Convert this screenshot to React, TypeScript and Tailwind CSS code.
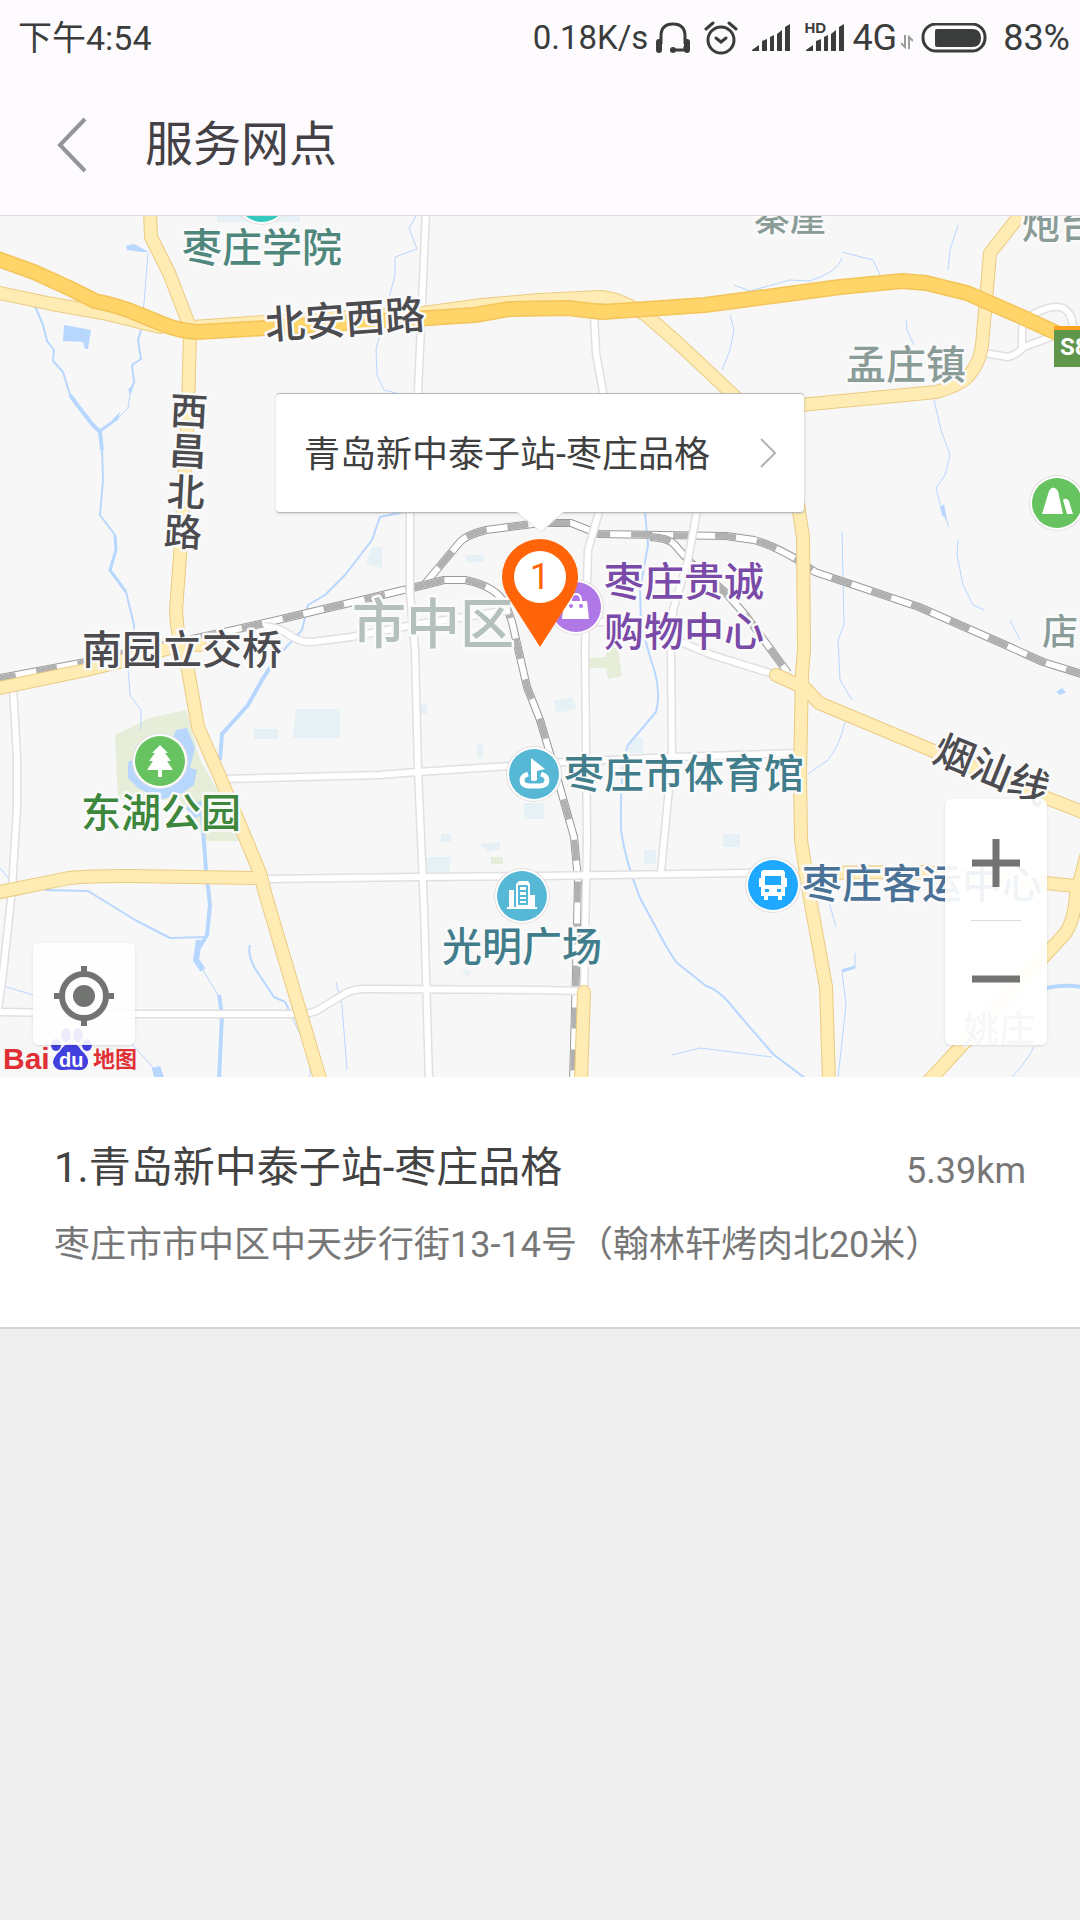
import type { ReactNode } from "react";

const UI_FONT = "font-['Roboto','Noto_Sans_CJK_SC',sans-serif]";
const MAP_FONT = "font-['Noto_Sans_CJK_SC',sans-serif]";

const whiteRoads = [
  "M426 210L422 303L418 392L410 512L410 593L415 650L418 770L424 907L429 1080",
  "M594 314L596 353L603 392L606 450L599 512L588 550L585 650L587 840L584 990",
  "M698 505L688 560L673 610L671 650L672 757L661 872",
  "M676 640L712 655L776 675",
  "M587 622H626",
  "M222 779L379 775L417 772L510 766L564 762L674 757L800 753",
  "M265 879L417 877L540 876L747 873L805 873",
  "M0 1012L134 1014L296 1014Q308 1015 318 1010L346 993Q355 989 365 989L540 990L580 991",
  "M13 688L17 757L17 807L12 890L3 973L-2 1010",
  "M264 626Q280 628 288 634Q300 643 312 642L351 637L413 625L510 610",
  "M984 353L1008 357Q1018 354 1024 347L1056 335",
  "M1022 350V332Q1022 318 1040 311Q1070 298 1073 326",
];

const yellowRoads = [
  "M-5 292L52 304L103 313L160 327",
  "M150 210L151 237L169 273L188 322",
  "M193 327L265 322L424 313L482 305L540 300L600 297Q620 298 647 316L678 343L728 390L745 406",
  "M800 405L936 392Q962 385 970 374Q980 362 982 345L988 277L990 253L1024 210",
  "M190 332L188 410L181 543L176 610Q177 640 188 670L198 727L220 777L260 873L265 893L321 1082",
  "M-5 689L86 670L127 660L184 644L200 645",
  "M-5 893L69 878Q90 876 127 876L258 878",
  "M798 505L803 537L804 650L802 673L800 773L801 840L809 893L826 987L829 1082",
  "M776 675L805 688L819 703L936 752L1039 795L1085 813",
  "M805 873L922 872L1046 883L1085 887",
  "M1088 850L1076 895Q1074 925 1062 937L928 1082",
  "M584 992L581 1082",
];

const highway =
  "M-5 258L34 272L69 288L95 301Q120 306 138 314L165 325Q180 331 198 332L265 328L413 319L475 315L510 309L568 308L602 312L705 305L788 294L840 287L902 281L926 283L967 293L1022 317L1085 346";

const rails = [
  "M-5 679L86 662L220 633L269 622L362 600L424 585L460 542Q466 535 486 530L540 523L571 523L599 534L726 536L754 540Q772 545 798 560L815 572L919 607L1001 643L1043 662L1085 675",
  "M424 585L444 580L465 580Q496 586 506 605L512 622L527 687L540 720L557 777L574 837L578 880L576 973L573 1082",
  "M650 537Q668 538 674 544L688 560L726 593L747 617L788 673",
];

const rivers = [
  { w: 2, d: "M35 306L43 325L47 341L54 350L53 361L63 372L70 395" },
  { w: 4, d: "M70 395L78 406L92 424L100 432L102 450" },
  { w: 2, d: "M102 450L103 480L100 515L115 535" },
  { w: 3, d: "M115 535L116 550L110 570L126 592" },
  { w: 2, d: "M126 592L134 625L134 640" },
  { w: 1, d: "M128 668L130 695L141 710V730" },
  { w: 1, d: "M148 253L144 303L141 330" },
  { w: 2, d: "M141 330L138 340L141 359L132 365L134 382L130 394" },
  { w: 1, d: "M130 394L128 408L118 418" },
  { w: 3, d: "M118 418L100 431" },
  { w: 1, d: "M416 216L409 228L417 249L395 257L395 275L386 310L376 350L377 375L384 390L400 394" },
  { w: 2, d: "M404 512L380 517L372 540L345 575L325 595L308 605L302 630L279 655" },
  { w: 4, d: "M275 660L262 680L248 705L222 734L220 760" },
  { w: 4, d: "M202 815L206 870L210 905L207 935L199 948" },
  { w: 6, d: "M199 940L196 960L203 970" },
  { w: 1, d: "M203 970L218 995" },
  { w: 4, d: "M219 995L222 1015L219 1080" },
  { w: 2, d: "M45 890L88 891L135 920L170 938L206 937" },
  { w: 2, d: "M250 945Q247 955 256 970L274 997L285 1002L290 1012" },
  { w: 1, d: "M290 1012L298 1030L310 1055V1080" },
  { w: 1, d: "M336 982L342 1005L347 1070" },
  { w: 1, d: "M0 985L40 997M130 1042L150 1064L160 1078M0 868L10 880" },
  { w: 2, d: "M645 512L648 545L640 590L641 625L651 660Q662 690 656 712L628 745Q620 765 621 830Q625 860 640 898L666 946L676 962L706 986Q720 990 735 1010L774 1055L805 1078" },
  { w: 1, d: "M672 1055L700 1048L772 1057" },
  { w: 1, d: "M734 285L750 291L790 280L810 281Q838 272 842 258M842 252L873 260L880 275" },
  { w: 1, d: "M906 320L907 330L914 345M958 225L950 250L948 270M730 315L734 330L730 350L722 370" },
  { w: 1, d: "M934 400L941 430L950 455L945 475L936 488L940 504L949 527M842 532L844 625L838 640L840 680L852 700" },
  { w: 1, d: "M958 540L957 555L963 585L973 605L984 610M1010 620L1020 640" },
  { w: 1, d: "M845 722Q840 745 828 760L808 774M829 902L836 927" },
  { w: 1, d: "M855 953V968" },
  { w: 3, d: "M855 967L842 971" },
  { w: 1, d: "M842 972L846 1005L838 1078" },
  { w: 4, d: "M1046 988Q1065 984 1082 987" },
  { w: 1, d: "M1036 1042Q1030 1058 1012 1077" },
];

type LabelProps = {
  x: number;
  y: number;
  fill: string;
  size?: number;
  rotate?: number;
  anchor?: "start" | "middle";
  children: string;
};

/* (x, y) is the middle of the glyphs' em boxes. */
function Label({ x, y, fill, size = 40, rotate = 0, anchor = "middle", children }: LabelProps) {
  return (
    <text
      x={x}
      y={y + Math.round(size * 0.38)}
      fill={fill}
      fontSize={size}
      textAnchor={anchor}
      stroke="#fafafa"
      strokeWidth={5}
      strokeLinejoin="round"
      paintOrder="stroke"
      transform={rotate ? `rotate(${rotate} ${x} ${y})` : undefined}
      className="font-medium"
    >
      {children}
    </text>
  );
}

function Poi({ x, y, fill, children }: { x: number; y: number; fill: string; children?: ReactNode }) {
  return (
    <g transform={`translate(${x} ${y})`}>
      <circle r={28} fill="#e4dede" />
      <circle r={27} fill="#fff" />
      <circle r={25} fill={fill} />
      {children}
    </g>
  );
}

function CityMap() {
  return (
    <svg
      viewBox="0 216 1080 861"
      className={`block h-full w-full ${MAP_FONT}`}
      fill="none"
      strokeLinejoin="round"
      role="img"
      aria-label="地图"
    >
      <rect y="216" width="1080" height="861" fill="#f7f7f7" />
      <g fill="#e6eed9">
        <path d="M115 735L150 718L186 710L200 760L238 826V841H206L180 800L118 800Z" />
        <path d="M588 658L606 657V648H618L622 676L608 679L606 668L588 668Z" />
        <path d="M491 857H503V864H491Z" />
      </g>
      <g fill="#e5f1f5">
        <path d="M296 709H340V738H293Z" />
        <path d="M254 729H278V739H254Z" />
        <path d="M217 222H300V210H217Z" />
        <path d="M372 547H382V568L366 564Z" />
        <path d="M466 555H484V562H466Z" />
        <path d="M477 743H483V757H477Z" />
        <path d="M554 701L572 697L577 709L556 713Z" />
        <path d="M632 738H643V753H627Z" />
        <path d="M723 834H740V847H723Z" />
        <path d="M425 857H451L449 872H425Z" />
        <path d="M480 844L500 842V849L488 852Z" />
        <path d="M441 834H451V842H441ZM420 705H427V714H420Z" />
        <path d="M524 803H544V819H524ZM644 850H656V864H644Z" />
        <path d="M462 969L472 972L466 977Z" />
      </g>
      <g fill="#b8d7ff">
        <path d="M64 325L91 330L88 349H85L83 342L63 341Z" />
        <path d="M126 246L134 244L149 252L142 252L127 250Z" />
        <path d="M128 762L172 740L176 730L187 728L195 748L190 768L197 770L194 785L182 793L160 800L138 788L128 778Z" />
        <path d="M186 808L202 800V815L195 818Z" />
        <path d="M152 1068L160 1066L164 1077H154Z" />
        <path d="M128 390L136 380L130 393ZM112 420L120 412L118 420Z" />
        <path d="M940 507L944 504L947 520L942 515ZM1056 692L1062 688L1066 692L1060 695Z" />
      </g>
      <g stroke="#b8d7ff">
        {rivers.map((r) => (
          <path key={r.d} d={r.d} strokeWidth={r.w} />
        ))}
      </g>
      {rails.map((d) => (
        <g key={d}>
          <path d={d} stroke="#9a9a9a" strokeWidth={8} />
          <path d={d} stroke="#fff" strokeWidth={6} />
          <path d={d} stroke="#b1b1b1" strokeWidth={6} strokeDasharray="21 21" />
        </g>
      ))}
      <g stroke="#e2dfe2" strokeWidth={9}>
        {whiteRoads.map((d) => (
          <path key={d} d={d} />
        ))}
      </g>
      <g stroke="#fff" strokeWidth={6}>
        {whiteRoads.map((d) => (
          <path key={d} d={d} />
        ))}
      </g>
      <g stroke="#ebca80" strokeWidth={14} strokeLinecap="round">
        {yellowRoads.map((d) => (
          <path key={d} d={d} />
        ))}
      </g>
      <g stroke="#ffecb5" strokeWidth={12} strokeLinecap="round">
        {yellowRoads.map((d) => (
          <path key={d} d={d} />
        ))}
      </g>
      <path d={highway} stroke="#f4c458" strokeWidth={16} />
      <path d={highway} stroke="#ffd56a" strokeWidth={13} />

      <path d="M1054 326H1080V367H1054Z" fill="#5f964a" />
      <path d="M1054 326H1080V330H1054Z" fill="#ffa21f" />
      <text x="1060" y="355" fill="#fff" fontSize="24" className="font-['Roboto',sans-serif] font-bold">
        S8
      </text>

      <Poi x={262} y={197} fill="#35c8be" />
      <Poi x={160} y={761} fill="#67c35f">
        <path
          d="M0 -16L8 -8H5L11 0H7L13 9H2V16H-2V9H-13L-7 0H-11L-5 -8H-8Z"
          fill="#fff"
        />
      </Poi>
      <Poi x={1057} y={503} fill="#67c35f">
        <path d="M-15 11L-8 -12Q-4 -19 1 -12L6 11ZM6 -3Q9 -6 12 -2L16 11H10Z" fill="#fff" />
      </Poi>
      <Poi x={534} y={774} fill="#56b8d5">
        <path d="M-6 0Q-12 2 -12 6Q-12 12 -4 12H5Q13 12 13 6Q13 2 7 0" stroke="#fff" strokeWidth={5} />
        <path d="M-3 6V-16L11 -5L3 -3V6Q0 8 -3 6Z" fill="#fff" />
      </Poi>
      <Poi x={522} y={896} fill="#56b8d5">
        <path d="M-15 13V11H-13V-6H-8V11H-6V-12L-3 -15H6L8 -12V-1H13V11H15V13Z" fill="#fff" />
        <path d="M-3 -10H5V8H-3ZM-3 -5H5M-3 0H5M-3 4H5" stroke="#56b8d5" strokeWidth={2} />
      </Poi>
      <Poi x={773} y={885} fill="#1fa8ff">
        <path
          d="M-9 -15H9Q12 -15 12 -11V-7H14V2H12V11H9V15H5V11H-5V15H-9V11H-12V2H-14V-7H-12V-11Q-12 -15 -9 -15Z"
          fill="#fff"
        />
        <path d="M-8 -9H8V0H-8ZM-8 4H-4V7H-8ZM4 4H8V7H4Z" fill="#1fa8ff" />
      </Poi>
      <Poi x={576} y={607} fill="#b077e6">
        <path d="M-12 -6H11L13 12H-14Z" fill="#fff" />
        <path d="M-5 -6Q-5 -13 0 -13Q5 -13 5 -6" stroke="#fff" strokeWidth={2} />
        <circle cx={-5} cy={-1} r={2} fill="#b077e6" />
        <circle cx={5} cy={-1} r={2} fill="#b077e6" />
      </Poi>

      <Label x={262} y={247} fill="#4f877c">枣庄学院</Label>
      <Label x={345} y={319} fill="#4c4c50" rotate={-4}>北安西路</Label>
      <Label x={189} y={411} fill="#4c4c50" size={38} rotate={3}>西</Label>
      <Label x={188} y={451} fill="#4c4c50" size={38} rotate={3}>昌</Label>
      <Label x={186} y={492} fill="#4c4c50" size={38} rotate={3}>北</Label>
      <Label x={183} y={532} fill="#4c4c50" size={38} rotate={3}>路</Label>
      <Label x={182} y={649} fill="#4c4c50">南园立交桥</Label>
      <Label x={433} y={623} fill="#b3c0bd" size={54}>市中区</Label>
      <Label x={790} y={217} fill="#8a9c97" size={36}>秦崖</Label>
      <Label x={1022} y={224} fill="#8a9c97" size={38} anchor="start">炮台</Label>
      <Label x={906} y={364} fill="#8a9c97">孟庄镇</Label>
      <Label x={1042} y={631} fill="#8a9c97" size={36} anchor="start">店</Label>
      <Label x={684} y={581} fill="#7a4aa8">枣庄贵诚</Label>
      <Label x={684} y={631} fill="#7a4aa8">购物中心</Label>
      <Label x={684} y={773} fill="#417d8b">枣庄市体育馆</Label>
      <Label x={522} y={946} fill="#417d8b">光明广场</Label>
      <Label x={922} y={883} fill="#4a7296">枣庄客运中心</Label>
      <Label x={161} y={812} fill="#3d873c">东湖公园</Label>
      <Label x={992} y={769} fill="#4c4c50" rotate={22}>烟汕线</Label>
      <Label x={999} y={1028} fill="#8a9c97" size={36}>姚庄</Label>

      <g fill="#4340e0">
        <ellipse cx={66} cy={1035} rx={5} ry={7} />
        <ellipse cx={78} cy={1035} rx={5} ry={7} />
        <ellipse cx={56} cy={1045} rx={5} ry={6} />
        <ellipse cx={87} cy={1045} rx={5} ry={6} />
        <path d="M71 1043Q77 1043 81 1050Q89 1057 88 1063Q86 1071 78 1070Q71 1069 64 1070Q55 1071 53 1063Q53 1057 60 1051Q65 1043 71 1043Z" />
      </g>
      <text x="3" y="1069" fill="#e03036" fontSize="30" className="font-['Liberation_Sans',sans-serif] font-bold">
        Bai
      </text>
      <text x="59" y="1067" fill="#fff" fontSize="20" className="font-['Liberation_Sans',sans-serif] font-bold">
        du
      </text>
      <text x="93" y="1067" fill="#e03036" fontSize="22" className="font-bold">
        地图
      </text>
    </svg>
  );
}

function SignalBars() {
  return (
    <svg viewBox="0 0 38 28" className="h-7 w-[38px]" fill="#3b3c3c" aria-hidden="true">
      <path d="M0 27V26L7 21V27ZM10 17L15 15V27H10ZM18 13L22 11V27H18ZM25 10L30 6V27H25ZM33 3L38 0V27H33Z" />
    </svg>
  );
}

function StatusBar() {
  return (
    <div className="flex h-[75px] items-center justify-between pr-[10px] pl-[18px] text-[#3b3c3c]">
      <time className="text-[34px] leading-10">下午4:54</time>
      <div className="flex items-center text-[36px] leading-10">
        <span className="text-[33px]">0.18K/s</span>
        <svg viewBox="0 0 34 32" className="ml-2 h-8 w-[34px]" fill="none" stroke="#3b3c3c" strokeWidth="3" aria-hidden="true">
          <path d="M5 22V14Q5 2 17 2Q29 2 29 14V22M17 28H29V24" />
          <path d="M3 20V28M31 20V28" strokeWidth="6" strokeLinecap="round" />
          <circle cx="17" cy="28" r="3" fill="#3b3c3c" stroke="none" />
        </svg>
        <svg viewBox="0 0 34 34" className="ml-[14px] h-[34px] w-[34px]" fill="none" stroke="#3b3c3c" strokeWidth="3" strokeLinecap="round" aria-hidden="true">
          <circle cx="17" cy="19" r="13" />
          <path d="M12 17L17 21L22 17M2 8L9 2M32 8L25 2" />
        </svg>
        <div className="ml-[14px]">
          <SignalBars />
        </div>
        <div className="relative ml-4">
          <SignalBars />
          <span className="absolute -top-1 -left-[2px] font-['Liberation_Sans',sans-serif] text-[15px] leading-none font-bold">HD</span>
        </div>
        <span className="ml-2">4G</span>
        <svg viewBox="0 0 12 14" className="mt-2 ml-1 h-[14px] w-3" fill="none" stroke="#9b9b9d" strokeWidth="2" aria-hidden="true">
          <path d="M4 0V12L0 8M8 14V2L12 6" />
        </svg>
        <svg viewBox="0 0 66 30" className="ml-2 h-[30px] w-[66px]" aria-hidden="true">
          <rect x="2" y="1" width="62" height="27" rx="13" fill="none" stroke="#3b3c3c" strokeWidth="3" />
          <path d="M16 6H51Q60 6 60 15Q60 24 51 24H16Q14 24 14 22V8Q14 6 16 6Z" fill="#3b3c3c" />
        </svg>
        <span className="ml-4">83%</span>
      </div>
    </div>
  );
}

export default function App() {
  return (
    <div className={`flex min-h-screen flex-col bg-[#efefef] ${UI_FONT}`}>
      <header className="border-b border-[#dedbde] bg-[#fefbff]">
        <StatusBar />
        <div className="flex h-[140px] items-center pl-14">
          <button type="button" aria-label="返回" className="h-14 w-8">
            <svg viewBox="0 0 32 56" className="h-14 w-8" fill="none" stroke="#929696" strokeWidth="4">
              <path d="M29 2L4 28L29 54" />
            </svg>
          </button>
          <h1 className="ml-[57px] text-[48px] leading-[56px] text-[#434145]">服务网点</h1>
        </div>
      </header>

      <section className="relative aspect-[1080/861] w-full overflow-hidden" aria-label="网点地图">
        <CityMap />

        <div className="absolute bottom-1/2 left-1/2 flex -translate-x-1/2 flex-col items-center">
          <button
            type="button"
            className="flex h-[120px] items-center gap-[50px] rounded-sm border-t border-b border-[#b9b9b9] bg-white px-7 pt-1 text-[36px] leading-10 whitespace-nowrap text-[#3f3f3f] shadow-sm"
          >
            青岛新中泰子站-枣庄品格
            <svg viewBox="0 0 16 30" className="-mt-1 h-[30px] w-4" fill="none" stroke="#b4b4b4" strokeWidth="2">
              <path d="M1 1L15 15L1 29" />
            </svg>
          </button>
          <svg viewBox="0 0 48 22" className="relative -mt-[2px] h-[22px] w-12" aria-hidden="true">
            <path d="M0 0H48L25 21Z" fill="#fff" />
            <path d="M0 1L25 21L48 1" fill="none" stroke="#dcdcdc" />
          </svg>
          <div className="relative mt-[6px]">
            <svg viewBox="0 0 76 108" className="h-[108px] w-[76px]" aria-hidden="true">
              <path d="M38 108L6 58Q0 48 0 38A38 38 0 0 1 76 38Q76 48 70 58Z" fill="#ff6508" />
              <circle cx="38" cy="38" r="26" fill="#fff" />
            </svg>
            <span className="absolute inset-x-0 top-5 text-center text-[36px] leading-9 text-[#ff6508]">1</span>
          </div>
        </div>

        <button
          type="button"
          aria-label="定位"
          className="absolute bottom-8 left-[33px] flex h-[102px] w-[102px] items-center justify-center rounded-md bg-white/90 pt-1 shadow-sm"
        >
          <svg viewBox="0 0 60 60" className="h-[60px] w-[60px]" fill="none" stroke="#727472" strokeWidth="6">
            <circle cx="30" cy="30" r="22" />
            <circle cx="30" cy="30" r="11" fill="#727472" stroke="none" />
            <path d="M30 0V8M30 52V60M0 30H8M52 30H60" />
          </svg>
        </button>

        <div className="absolute right-[33px] bottom-8 flex w-[102px] flex-col items-center rounded-md bg-white/92 pt-[6px] pb-[9px] shadow-sm">
          <button type="button" aria-label="放大" className="flex h-[115px] w-full items-center justify-center">
            <svg viewBox="0 0 48 48" className="h-12 w-12" stroke="#727472" strokeWidth="7">
              <path d="M24 0V48M0 24H48" />
            </svg>
          </button>
          <hr className="w-[50px] border-[#dcdcdc]" />
          <button type="button" aria-label="缩小" className="flex h-[115px] w-full items-center justify-center">
            <svg viewBox="0 0 48 48" className="h-12 w-12" stroke="#727472" strokeWidth="7">
              <path d="M0 24H48" />
            </svg>
          </button>
        </div>
      </section>

      <ul className="bg-white">
        <li className="border-b-2 border-[#d4d4d4] px-[54px] pt-[66px] pb-[60px]">
          <div className="flex items-start justify-between">
            <h2 className="text-[42px] leading-[50px] text-[#434343]">1.青岛新中泰子站-枣庄品格</h2>
            <span className="text-[36px] leading-[56px] text-[#777]">5.39km</span>
          </div>
          <p className="mt-6 text-[36px] leading-[44px] text-[#777]">
            枣庄市市中区中天步行街13-14号（翰林轩烤肉北20米）
          </p>
        </li>
      </ul>
    </div>
  );
}
